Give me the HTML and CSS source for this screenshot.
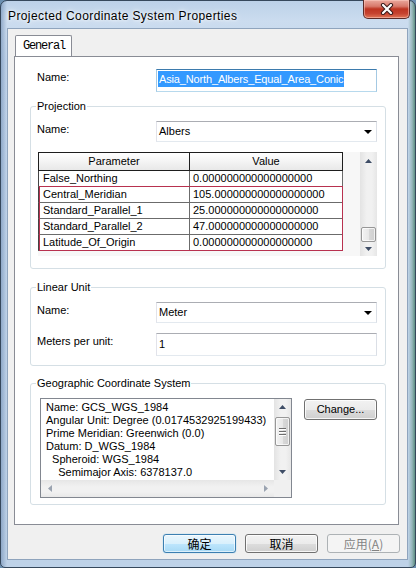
FILE: index.html
```html
<!DOCTYPE html>
<html>
<head>
<meta charset="utf-8">
<link rel="stylesheet" href="styles.css">
</head>
<body>
<div class="window">
  <div class="titlebar">
    <span class="title">Projected Coordinate System Properties</span>
    <div class="close">
      <svg width="16" height="12" viewBox="0 0 16 12">
        <path d="M4 2 L12 10 M12 2 L4 10" stroke="#3a1a1a" stroke-width="4.2" stroke-linecap="round"/>
        <path d="M4 2 L12 10 M12 2 L4 10" stroke="#ffffff" stroke-width="2.2" stroke-linecap="round"/>
      </svg>
    </div>
  </div>
  <div class="client">
    <div class="tabs"><div class="tab">General</div></div>
    <div class="page">
      <div class="row top-row">
        <span class="lbl">Name:</span>
        <div class="field focused"><span class="sel">Asia_North_Albers_Equal_Area_Conic</span></div>
      </div>

      <fieldset class="group proj">
        <legend>Projection</legend>
        <div class="row">
          <span class="lbl">Name:</span>
          <div class="field combo"><span>Albers</span><i class="drop"></i></div>
        </div>
        <div class="gridwrap">
          <div class="grid">
            <div class="hdr"><div class="c1">Parameter</div><div class="c2">Value</div></div>
            <div class="gr"><div class="c1">False_Northing</div><div class="c2">0.000000000000000000</div></div>
            <div class="selrows">
              <div class="gr"><div class="c1">Central_Meridian</div><div class="c2">105.000000000000000000</div></div>
              <div class="gr"><div class="c1">Standard_Parallel_1</div><div class="c2">25.000000000000000000</div></div>
              <div class="gr"><div class="c1">Standard_Parallel_2</div><div class="c2">47.000000000000000000</div></div>
              <div class="gr"><div class="c1">Latitude_Of_Origin</div><div class="c2">0.000000000000000000</div></div>
            </div>
          </div>
          <div class="vsb tablesb">
            <div class="arr"><svg width="7" height="4" viewBox="0 0 7 4"><path d="M0 4 L3.5 0 L7 4Z" fill="#3e4d66"/></svg></div>
            <div class="track"></div>
            <div class="thumb"></div>
            <div class="arr dn"><svg width="7" height="4" viewBox="0 0 7 4"><path d="M0 0 L3.5 4 L7 0Z" fill="#3e4d66"/></svg></div>
          </div>
        </div>
      </fieldset>

      <fieldset class="group lin">
        <legend>Linear Unit</legend>
        <div class="row">
          <span class="lbl">Name:</span>
          <div class="field combo"><span>Meter</span><i class="drop"></i></div>
        </div>
        <div class="row r2">
          <span class="lbl">Meters per unit:</span>
          <div class="field tall"><span>1</span></div>
        </div>
      </fieldset>

      <fieldset class="group gcs">
        <legend>Geographic Coordinate System</legend>
        <div class="gcsrow">
          <div class="list">
            <div class="listmain">
              <div class="listtext">Name: GCS_WGS_1984
Angular Unit: Degree (0.0174532925199433)
Prime Meridian: Greenwich (0.0)
Datum: D_WGS_1984
  Spheroid: WGS_1984
    Semimajor Axis: 6378137.0</div>
              <div class="vsb listsb">
                <div class="arr"><svg width="7" height="4" viewBox="0 0 7 4"><path d="M0 4 L3.5 0 L7 4Z" fill="#3e4d66"/></svg></div>
                <div class="thumb grip"><span></span><span></span><span></span></div>
                <div class="track"></div>
                <div class="arr dn"><svg width="7" height="4" viewBox="0 0 7 4"><path d="M0 0 L3.5 4 L7 0Z" fill="#3e4d66"/></svg></div>
              </div>
            </div>
            <div class="hsb">
              <div class="harr"><svg width="4" height="7" viewBox="0 0 4 7"><path d="M4 0 L0 3.5 L4 7Z" fill="#9aa3b0"/></svg></div>
              <div class="htrack"></div>
              <div class="harr"><svg width="4" height="7" viewBox="0 0 4 7"><path d="M0 0 L4 3.5 L0 7Z" fill="#9aa3b0"/></svg></div>
              <div class="corner"></div>
            </div>
          </div>
          <div class="btn change">Change...</div>
        </div>
      </fieldset>
    </div>
    <div class="buttons">
      <div class="btn default">确定</div>
      <div class="btn">取消</div>
      <div class="btn disabled">应用(<u>A</u>)</div>
    </div>
  </div>
</div>
</body>
</html>
```
FILE: styles.css
```css
* { box-sizing: border-box; }
html, body { margin: 0; padding: 0; }
body {
  width: 416px;
  height: 568px;
  overflow: hidden;
  font-family: "Liberation Sans", Arial, sans-serif;
  font-size: 11px;
  color: #000;
  background: #6b8fb0;
}
.window {
  width: 416px;
  height: 568px;
  border: 1px solid #36485c;
  border-radius: 7px 7px 5px 5px;
  padding: 0 7px 7px 6px;
  display: flex;
  flex-direction: column;
  background:
    linear-gradient(to right, rgba(110,140,178,0.6) 0, rgba(190,208,230,0) 6px),
    linear-gradient(to left, rgba(60,120,95,0.75) 0, rgba(90,140,120,0.4) 3px, rgba(190,208,230,0) 7px),
    linear-gradient(to bottom, #bcd1e8 0, #cbdcef 20px, #c3d6ec 60px, #bed2e8 100%);
}
.titlebar {
  height: 27px;
  flex: none;
  display: flex;
  align-items: flex-start;
  justify-content: space-between;
}
.title {
  font-size: 12px;
  letter-spacing: 0.4px;
  line-height: 15px;
  padding: 8px 0 0 1px;
  color: #000;
  text-shadow: 0 0 6px #fff, 0 0 3px #fff;
}
.close {
  width: 47px;
  height: 19px;
  margin-top: -1px;
  margin-right: -2px;
  border: 1px solid #5b2b28;
  border-top: none;
  border-radius: 0 0 5px 5px;
  background: linear-gradient(to bottom, #eaa89d 0, #d8796b 35%, #bd3421 50%, #c64330 75%, #e07556 100%);
  display: flex;
  align-items: center;
  justify-content: center;
  box-shadow: inset 0 0 0 1px rgba(255,210,200,0.5);
}
.close svg { display: block; }
.client {
  flex: 1;
  border: 1px solid #8fa4bd;
  background: #f0f0f0;
  display: flex;
  flex-direction: column;
  padding: 6px 8px 0 6px;
}
.tabs {
  display: flex;
  padding-left: 1px;
  height: 21px;
  position: relative;
  z-index: 1;
}
.tab {
  width: 57px;
  height: 21px;
  border: 1px solid #898c95;
  border-bottom: none;
  border-radius: 2px 2px 0 0;
  background: #fff;
  font-family: "Liberation Mono", monospace;
  font-size: 12px;
  letter-spacing: -1.2px;
  padding: 4px 0 0 7px;
  line-height: 13px;
}
.page {
  height: 469px;
  border: 1px solid #898c95;
  background: #fff;
  display: flex;
  flex-direction: column;
  padding: 0 12px 0 15px;
}
.row {
  display: grid;
  grid-template-columns: 119px 221px;
  align-items: start;
}
.lbl {
  line-height: 13px;
  padding-top: 2px;
  white-space: nowrap;
}
.top-row {
  margin-top: 12px;
  padding-left: 7px;
}
.field {
  height: 21px;
  border: 1px solid;
  border-color: #abadb3 #dbdfe6 #e3e9ef #e2e3ea;
  background: #fff;
  display: flex;
  align-items: center;
  padding-left: 2px;
  line-height: 13px;
  position: relative;
}
.field.tall { height: 23px; }
.field.focused {
  height: 23px;
  border-color: #3d7bad #a4c9e3 #b7d9ed #a4c9e3;
  padding-left: 1px;
  align-items: flex-start;
  padding-top: 1px;
}
.sel {
  background: #3399ff;
  color: #fff;
  line-height: 16px;
  padding: 0 1px;
  letter-spacing: -0.15px;
}
.combo { justify-content: space-between; padding-right: 4px; }
.drop {
  width: 0; height: 0;
  border-left: 4px solid transparent;
  border-right: 4px solid transparent;
  border-top: 4px solid #000;
  margin-top: 1px;
}
.group {
  margin: 0;
  border: 1px solid #d5dfe5;
  border-radius: 3px;
  padding: 8px 8px 0 6px;
  min-width: 0;
}
.group legend {
  padding: 0 1px;
  margin-left: -1px;
  line-height: 13px;
  font-size: 11px;
}
.proj { margin-top: 8px; padding-bottom: 12px; }
.lin { margin-top: 12px; padding-bottom: 9px; }
.lin .r2 { margin-top: 10px; }
.gcs { margin-top: 11px; padding-bottom: 6px; }

.gridwrap {
  margin-top: 10px;
  margin-left: 1px;
  height: 104px;
  display: flex;
  background: #f7f7f7;
}
.grid {
  width: 306px;
  display: flex;
  flex-direction: column;
  overflow: hidden;
}
.hdr {
  display: flex;
  height: 19px;
  border: 1px solid #1e1e1e;
  background: linear-gradient(to bottom, #ffffff 0, #f4f4f4 50%, #e8e8e8 100%);
  line-height: 16px;
}
.hdr .c1 { width: 151px; text-align: center; border-right: 1px solid #1e1e1e; }
.hdr .c2 { flex: 1; text-align: center; }
.gr {
  display: flex;
  height: 16px;
  border-left: 1px solid #444;
  border-bottom: 1px solid #6b6b6b;
  background: #fff;
  line-height: 15px;
}
.gr .c1 { width: 151px; padding-left: 4px; border-right: 1px solid #6b6b6b; white-space: nowrap; overflow: hidden; }
.gr .c2 { flex: 1; padding-left: 3px; white-space: nowrap; overflow: hidden; border-right: 1px solid #6b6b6b; }
.selrows { position: relative; }
.selrows::after {
  content: "";
  position: absolute;
  left: 1px; right: 0; top: -1px; bottom: 0;
  border: 1px solid #b8314f;
}
.vsb {
  width: 17px;
  display: flex;
  flex-direction: column;
  background: linear-gradient(to right, #e3e3e3 0, #f1f1f1 40%, #f1f1f1 70%, #e6e6e6 100%);
}
.tablesb { margin-left: 17px; }
.arr {
  height: 17px;
  display: flex;
  align-items: center;
  justify-content: center;
  flex: none;
}
.arr svg, .harr svg { display: block; }
.track { flex: 1; }
.thumb {
  height: 16px;
  margin: 0 1px;
  flex: none;
  border: 1px solid #979797;
  border-radius: 2px;
  background: linear-gradient(to right, #f3f3f3 0, #e8e8e8 50%, #d9d9d9 51%, #cfcfcf 100%);
  box-shadow: inset 0 0 0 1px rgba(255,255,255,0.7);
}
.tablesb .arr.dn { height: 14px; }
.tablesb .thumb { height: 15px; margin-bottom: 0; }

.gcsrow {
  display: flex;
  align-items: flex-start;
}
.list {
  width: 252px;
  height: 100px;
  margin-left: 3px;
  border: 1px solid #828790;
  background: #fff;
  display: flex;
  flex-direction: column;
}
.listmain { flex: 1; display: flex; min-height: 0; }
.listtext {
  flex: 1;
  white-space: pre;
  line-height: 13px;
  padding: 2px 0 0 5px;
  overflow: hidden;
}
.listsb .arr { height: 16px; }
.listsb .thumb.grip {
  height: 29px;
  margin-top: 2px;
  display: flex;
  flex-direction: column;
  align-items: center;
  justify-content: center;
  gap: 2px;
}
.grip span { width: 7px; height: 1px; background: #6e6e6e; box-shadow: 0 1px 0 #fff; }
.hsb {
  height: 17px;
  flex: none;
  display: flex;
  background: linear-gradient(to bottom, #e6e6e6 0, #f1f1f1 40%, #f1f1f1 70%, #e8e8e8 100%);
}
.harr { width: 17px; display: flex; align-items: center; justify-content: center; }
.htrack { flex: 1; }
.corner { width: 17px; background: #f0f0f0; }

.btn {
  height: 19px;
  width: 73px;
  border: 1px solid #707070;
  border-radius: 3px;
  background: linear-gradient(to bottom, #f2f2f2 0, #ebebeb 50%, #dddddd 51%, #cfcfcf 100%);
  box-shadow: inset 0 0 0 1px rgba(255,255,255,0.8);
  display: flex;
  align-items: center;
  justify-content: center;
  font-family: "Noto Sans CJK SC", sans-serif;
  font-size: 12px;
  line-height: 15px;
}
.change {
  margin-left: 12px;
  margin-top: 1px;
  height: 21px;
  width: 73px;
  font-family: "Liberation Sans", Arial, sans-serif;
  font-size: 11px;
}
.buttons {
  display: flex;
  justify-content: flex-end;
  gap: 9px;
  margin-top: 9px;
  margin-right: -1px;
}
.btn.default {
  border-color: #3c7fb1;
  background: linear-gradient(to bottom, #eaf6fd 0, #d9f0fc 50%, #bee6fd 51%, #a7d9f5 100%);
  box-shadow: inset 0 0 0 1px rgba(255,255,255,0.6), 0 0 1px #4bb3e8;
}
.btn.disabled {
  border-color: #adb2b5;
  background: #f4f4f4;
  color: #838383;
  box-shadow: none;
}
.btn u { text-decoration: underline; }
```
